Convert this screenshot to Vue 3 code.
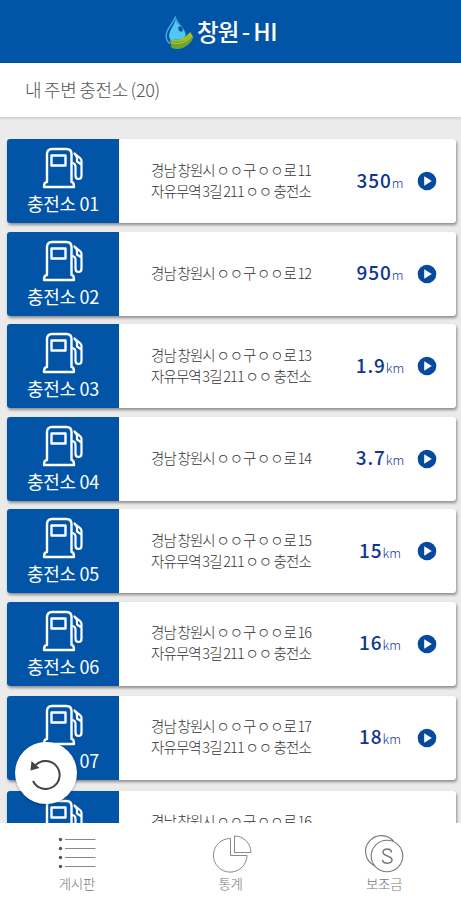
<template>
  <div class="app">
    <header class="header">
      <svg class="logo" width="30" height="36" viewBox="0 0 30 36">
        <path d="M10.500 1.500C9 8 1.500 13 1.200 20c-.2 4 1.300 7 4 8.500" fill="none" stroke="#3fa9e0" stroke-width="1.500" />
        <path d="M10.500 1C12 8 20.500 13 21 20l-2 2-1.500-4C17 13 12 9 10.500 5z" fill="#3fa9e0" />
        <path d="M10.500 5c1.500 5 9 8 9.500 14.500 0 3-1 4.500-3 5L5.500 25C1 18 9 12 10.500 5z" fill="#4fc8f5" />
        <ellipse cx="15.500" cy="14" rx="2" ry="2.800" transform="rotate(-25 15.500 14)" fill="#12508f" />
        <path d="M5 24.500c8 1.500 15-1 20-7.500 3 3 4 7 0 10-5 4-13 5.500-18 3z" fill="#a0bd29" />
        <path d="M5 25c8 4 17 1 23.500-5C28 29 16 37 6.500 33z" fill="#6da432" />
        <path d="M6 27.500c8 2.500 15 0 21-6" fill="none" stroke="#b8cd35" stroke-width="1" />
      </svg>
      <h1 class="brand">창원<span class="dash">-</span><span class="hi">HI</span></h1>
    </header>

    <div class="subtitle">
      <span>내 주변 충전소 (20)</span>
    </div>

    <main class="list">
      <div v-for="item in stations" :key="item.id" class="card">
        <div class="badge">
          <svg class="pump" width="42" height="42" viewBox="0 0 42 42">
            <g fill="none" stroke="#fff" stroke-width="2.4" stroke-linejoin="round">
              <path d="M5 35V7q0-5 5-5h14.500q5 0 5 5v28q2.500 0 2.500 5H2q0-5 3-5z" />
              <path d="M9.500 8.500h14v10h-14z" />
              <path d="M29.500 16q4 0 4 4v8.500q0 3.500 3 3.500t3-3.500V14q0-1.500-1.500-3L32.500 6.500l2.500 3.500v4.500l4.500 3" stroke-width="2.200" />
            </g>
          </svg>
          <span class="name">충전소 {{ item.id }}</span>
        </div>
        <div class="address">
          <p>경남 창원시 <i>ㅇㅇ</i>구 <i>ㅇㅇ</i>로 {{ item.road }}</p>
          <p v-if="item.detail">자유무역 3길 211 <i>ㅇㅇ</i> 충전소</p>
        </div>
        <div class="distance">
          <b>{{ item.distance }}</b><small>{{ item.unit }}</small>
        </div>
        <svg class="go" width="20" height="20" viewBox="0 0 20 20">
          <circle cx="10" cy="10" r="9.300" fill="#07499f" />
          <path d="M7.200 5.200v9.600l7.600-4.800z" fill="#fff" />
        </svg>
      </div>
    </main>

    <button class="refresh">
      <svg width="34" height="34" viewBox="0 0 34 34">
        <path d="M5.500 10.500A14 14 0 1 1 4 25" fill="none" stroke="#444" stroke-width="2" />
        <path d="M2.500 5L1.500 14.500l9-2.500z" fill="#444" />
      </svg>
    </button>

    <nav class="tabs">
      <a class="tab">
        <svg width="40" height="38" viewBox="0 0 40 38">
          <g v-for="y in [4, 13, 22, 31]" :key="y">
            <circle cx="3.500" :cy="y + 0.5" r="1.700" fill="#555" />
            <path :d="`M8 ${y + 0.5}h30.500`" stroke="#888" stroke-width="1" />
          </g>
        </svg>
        <span>게시판</span>
      </a>
      <a class="tab">
        <svg width="40" height="38" viewBox="0 0 40 38">
          <g fill="none" stroke="#888" stroke-width="1">
            <path d="M19.500 3.500A16.800 16.800 0 1 0 36 20.500H19.500z" />
            <path d="M23.500 1A16.500 16.500 0 0 1 40 17.500H23.500z" />
          </g>
        </svg>
        <span>통계</span>
      </a>
      <a class="tab">
        <svg width="40" height="38" viewBox="0 0 40 38">
          <g fill="none" stroke="#777" stroke-width="1.100">
            <circle cx="23" cy="21" r="15.800" />
            <path d="M10.600 30.700A15.800 15.800 0 1 1 30 6.900" />
            <path d="M27.500 17.500c-.5-4.500-8.500-4.500-8.500-.3s9 3.300 9 7.600c0 4.500-9 4.500-9.500 0" stroke-width="1.500" />
          </g>
        </svg>
        <span>보조금</span>
      </a>
    </nav>
  </div>
</template>

<script setup>
import { ref } from 'vue';

const stations = ref([
  { id: '01', road: '11', detail: true, distance: '350', unit: 'm' },
  { id: '02', road: '12', detail: false, distance: '950', unit: 'm' },
  { id: '03', road: '13', detail: true, distance: '1.9', unit: 'km' },
  { id: '04', road: '14', detail: false, distance: '3.7', unit: 'km' },
  { id: '05', road: '15', detail: true, distance: '15', unit: 'km' },
  { id: '06', road: '16', detail: true, distance: '16', unit: 'km' },
  { id: '07', road: '17', detail: true, distance: '18', unit: 'km' },
  { id: '08', road: '16', detail: true, distance: '20', unit: 'km' }
]);
</script>

<style>
body {
  margin: 0;
  overflow: hidden;
}
</style>

<style scoped>
.app {
  position: relative;
  display: flex;
  flex-direction: column;
  height: 900px;
  background: #ebebeb;
  font-family: "Noto Sans CJK KR", "Noto Sans", sans-serif;
  overflow: hidden;
}

.header {
  display: flex;
  flex: none;
  box-sizing: border-box;
  height: 63px;
  padding: 15px 0 0 165px;
  background: #0254a6;
}

.brand {
  margin: 0 0 0 2px;
  color: #fff;
  font-size: 23.5px;
  font-weight: 500;
  line-height: 32px;
  letter-spacing: -0.8px;
  white-space: nowrap;
}

.dash {
  margin: 0 4px 0 3px;
}

.hi {
  letter-spacing: -0.5px;
}

.subtitle {
  flex: none;
  height: 54px;
  padding-left: 25px;
  background: #fff;
  box-shadow: 0 1px 3px rgba(0, 0, 0, 0.18);
  color: #555;
  font-size: 18px;
  font-weight: 300;
  line-height: 52px;
  letter-spacing: -0.3px;
  word-spacing: -1px;
}

.list {
  display: flex;
  flex: 1;
  flex-direction: column;
  gap: 8.6px;
  min-height: 0;
  padding: 22px 5px 0 7px;
  overflow: hidden;
}

.card {
  display: flex;
  flex: none;
  align-items: center;
  height: 84px;
  border-radius: 3px;
  background: #fff;
  box-shadow: 1px 2px 3px rgba(0, 0, 0, 0.4);
}

.card:nth-child(7) {
  margin-top: 1.4px;
}

.card:nth-child(8) {
  margin-top: 2.4px;
}

.badge {
  display: flex;
  flex: none;
  flex-direction: column;
  align-items: center;
  width: 112px;
  height: 84px;
  border-radius: 3px 0 0 3px;
  background: #0254a6;
}

.pump {
  margin-top: 8px;
}

.name {
  color: #fff;
  font-size: 18px;
  line-height: 29px;
  letter-spacing: -0.3px;
}

.address {
  flex: none;
  width: 204px;
  margin: -3px 0 0 32px;
  color: #333;
  font-size: 14.5px;
  font-weight: 300;
  line-height: 21px;
  letter-spacing: -0.9px;
  word-spacing: -0.7px;
  white-space: nowrap;
}

.address p {
  margin: 0;
}

.address i {
  font-style: normal;
  letter-spacing: -0.1px;
}

.distance {
  flex: none;
  width: 50px;
  color: #0f3595;
  line-height: 24px;
  text-align: center;
  white-space: nowrap;
}

.distance b {
  font-size: 19px;
  font-weight: 500;
  letter-spacing: 0.9px;
}

.distance small {
  font-size: 13px;
  font-weight: 300;
}

.go {
  flex: none;
  margin-left: 12px;
}

.refresh {
  position: absolute;
  top: 742px;
  left: 15px;
  display: flex;
  align-items: center;
  justify-content: center;
  width: 62px;
  height: 62px;
  padding: 0;
  border: none;
  border-radius: 50%;
  background: #fff;
  box-shadow: 0 1px 3px rgba(0, 0, 0, 0.3);
}

.tabs {
  display: flex;
  flex: none;
  height: 77px;
  background: #fff;
}

.tab {
  display: flex;
  flex: 1;
  flex-direction: column;
  align-items: center;
  padding-top: 12px;
  color: #777;
  font-size: 13.5px;
  font-weight: 300;
  line-height: 21px;
  letter-spacing: -0.3px;
}

.tab svg {
  overflow: visible;
}
</style>
